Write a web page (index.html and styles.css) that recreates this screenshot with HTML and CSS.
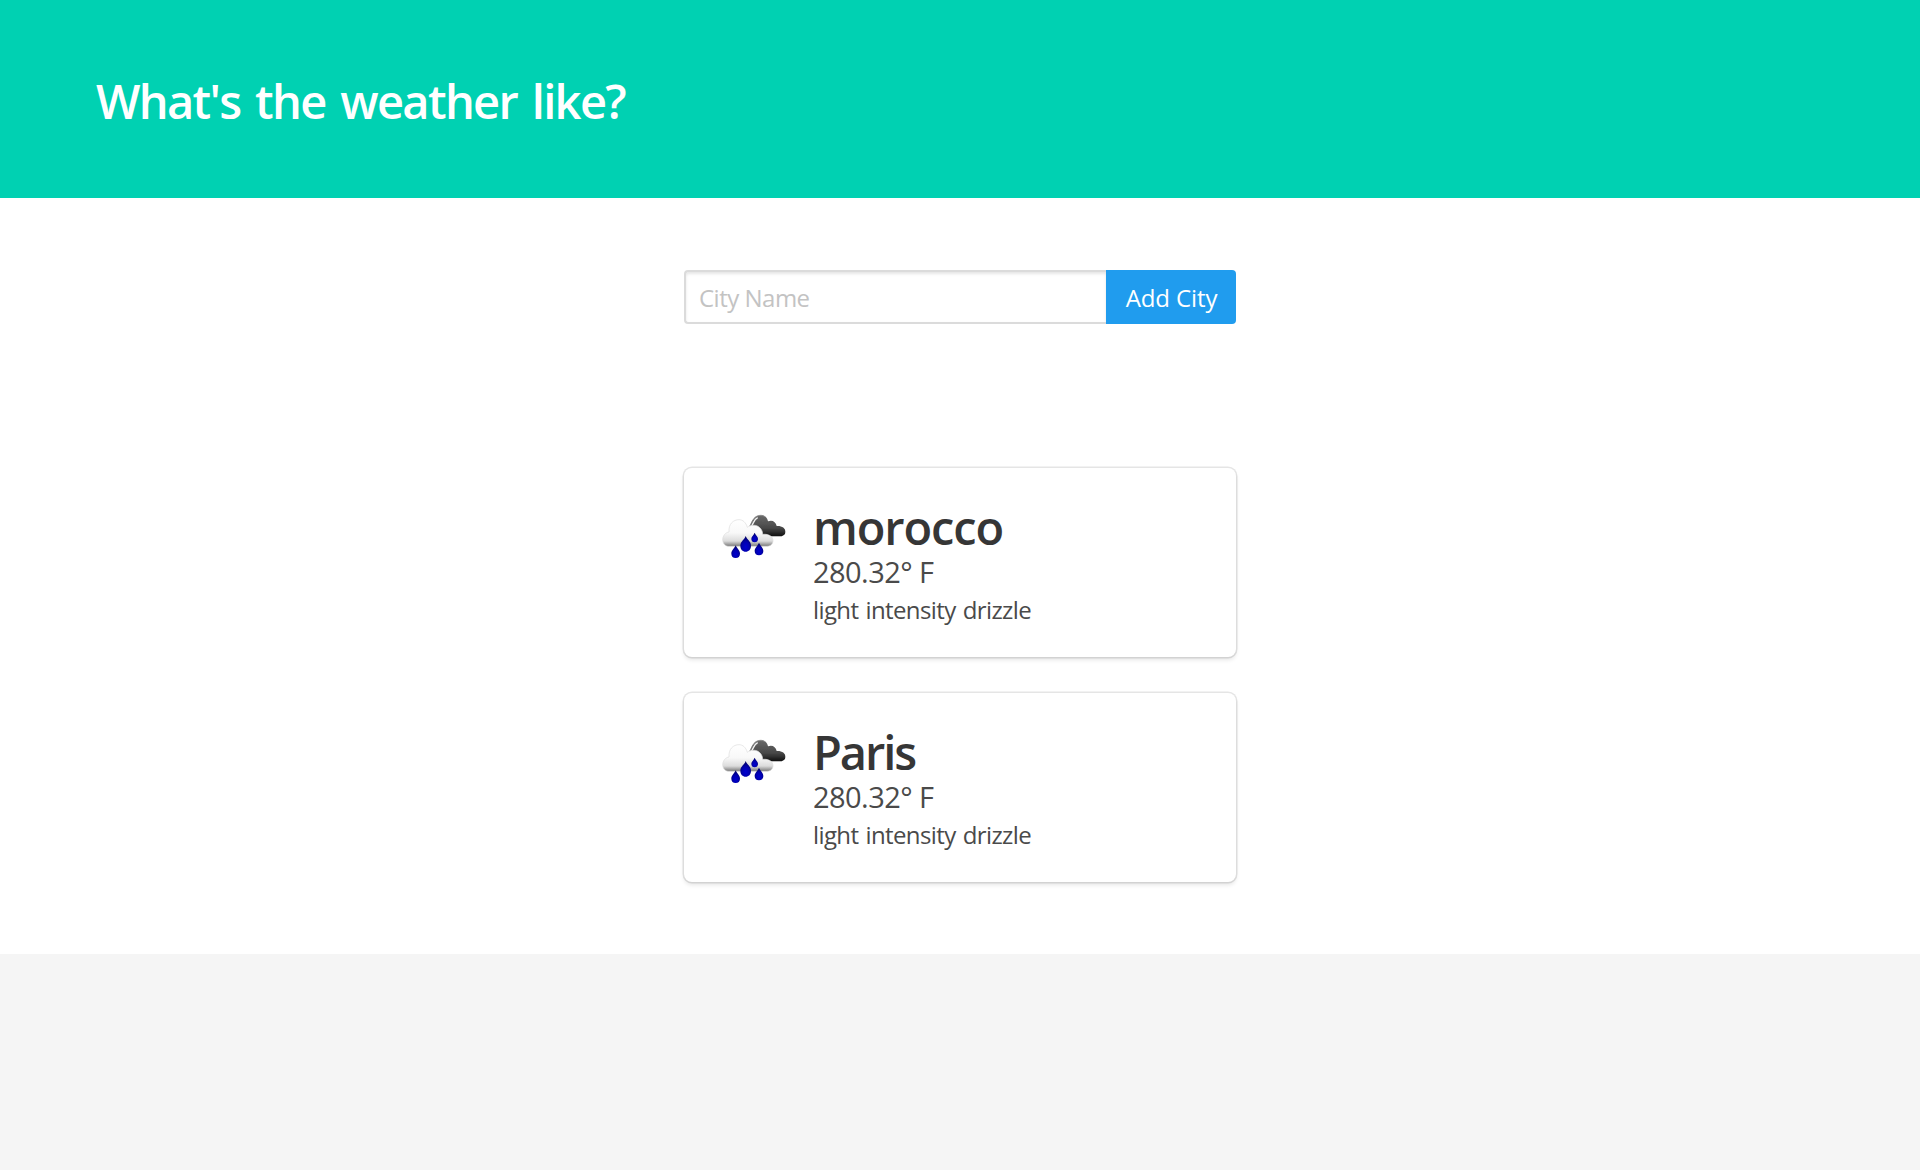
FILE: index.html
```html
<!DOCTYPE html>
<html lang="en">
<head>
<meta charset="utf-8">
<title>What's the weather like?</title>
<link rel="stylesheet" href="styles.css">
</head>
<body>
<svg width="0" height="0" class="defs" aria-hidden="true">
  <defs>
    <linearGradient id="dark" x1="0" y1="0" x2="0" y2="1"><stop offset="0" stop-color="#6a6a6a"/><stop offset=".6" stop-color="#484848"/><stop offset="1" stop-color="#111"/></linearGradient>
    <linearGradient id="light" x1="0" y1="0" x2="0" y2="1"><stop offset="0" stop-color="#fff"/><stop offset=".5" stop-color="#f8f8f8"/><stop offset=".8" stop-color="#dcdcdc"/><stop offset="1" stop-color="#777"/></linearGradient>
    <radialGradient id="drop" cx=".5" cy=".7" r=".6"><stop offset="0" stop-color="#0000d0"/><stop offset=".55" stop-color="#0000b0"/><stop offset="1" stop-color="#00006c"/></radialGradient>
    <filter id="soft" x="-10%" y="-10%" width="120%" height="120%"><feGaussianBlur stdDeviation="1.6"/></filter>
    <symbol id="rain" viewBox="12 -6 225 225">
      <g filter="url(#soft)">
        <path d="M120 78C127 57 139 45 153 46C164 46 172 53 174 64C187 59 197 65 200 78C216 77 226 84 226 95C226 105 218 109 208 109H176C155 109 140 92 120 78Z" fill="url(#dark)"/>
        <path d="M119 79C126 68 127 57 138 50C147 45 158 44 166 51" fill="none" stroke="#888" stroke-width="3"/>
        <path d="M123 80C132 70 130 59 143 53" fill="none" stroke="#f4f4f4" stroke-width="4"/>
        <path d="M54 139C41 137 36 124 39 112C42 103 49 97 57 96C55 72 70 59 87 59C99 59 108 68 112 82C120 76 134 73 144 79C154 85 158 94 158 103C177 101 190 110 189 124C188 135 179 139 170 139Z" fill="url(#light)" stroke="#ddd" stroke-width="2"/>
        <path d="M107 108C111 119 123 124 123 137C123 148 116 155 107 155S91 148 91 137C91 124 104 119 107 108Z" fill="url(#drop)"/>
        <path d="M134 98C137 106 144 109 144 117C144 123 140 127 134 127S124 123 124 117C124 109 131 106 134 98Z" fill="url(#drop)"/>
        <path d="M77 136C80 145 90 150 90 161C90 169 85 174 77 174S64 169 64 161C64 150 74 145 77 136Z" fill="url(#drop)"/>
        <path d="M147 128C150 137 160 142 160 153C160 161 155 166 147 166S134 161 134 153C134 142 144 137 147 128Z" fill="url(#drop)"/>
      </g>
    </symbol>
  </defs>
</svg>
<header class="hero"><h1 class="title hero-title">What's the weather like?</h1></header>
<main class="content">
  <form class="city-form">
    <input class="input" type="text" placeholder="City Name">
    <button class="button" type="button">Add City</button>
  </form>
  <section class="cities">
    <article class="box">
      <svg class="icon"><use href="#rain"/></svg>
      <div class="details">
        <h2 class="title name-morocco">morocco</h2>
        <p class="temperature">280.32° F</p>
        <p class="description">light intensity drizzle</p>
      </div>
    </article>
    <article class="box">
      <svg class="icon"><use href="#rain"/></svg>
      <div class="details">
        <h2 class="title name-paris">Paris</h2>
        <p class="temperature">280.32° F</p>
        <p class="description">light intensity drizzle</p>
      </div>
    </article>
  </section>
</main>
</body>
</html>
```
FILE: styles.css
```css
* { box-sizing: border-box; margin: 0; padding: 0; }
body {
  min-height: 1170px;
  background: #f5f5f5;
  color: #4a4a4a;
  font-family: "Open Sans", "Noto Sans", sans-serif;
  font-size: 24px;
}
.defs { display: block; width: 0; height: 0; position: absolute; }
.hero {
  height: 198px;
  padding: 74px 96px 0;
  background: #00d1b2;
}
.title {
  color: #363636;
  font-size: 47px;
  font-weight: 600;
  line-height: 54px;
  white-space: nowrap;
}
.hero-title { color: #fff; font-size: 47px; letter-spacing: -1.65px; word-spacing: 4px; }
.name-morocco { letter-spacing: -1.1px; }
.name-paris { letter-spacing: -2.1px; }
.content {
  height: 756px;
  padding-top: 72px;
  background: #fff;
}
.city-form {
  display: flex;
  width: 552px;
  height: 54px;
  margin: 0 auto;
}
.input {
  width: 422px;
  height: 54px;
  padding: 1px 13px 0;
  border: 2px solid #dbdbdb;
  border-right: 0;
  border-radius: 4px 0 0 4px;
  background: #fff;
  box-shadow: inset 0 2px 3px rgba(10, 10, 10, .1);
  font-family: inherit;
  font-size: 24px;
  letter-spacing: -.5px;
}
.input::placeholder { color: #c3c3c3; }
.button {
  width: 130px;
  height: 54px;
  padding: 1px 0 0 1px;
  border: 0;
  border-radius: 0 4px 4px 0;
  background: #209cee;
  color: #fff;
  font-family: inherit;
  font-size: 24px;
  letter-spacing: -.1px;
}
.cities {
  display: flex;
  flex-direction: column;
  gap: 36px;
  width: 552px;
  margin: 144px auto 0;
}
.box {
  display: flex;
  gap: 24px;
  height: 189px;
  padding: 30px;
  border-radius: 8px;
  background: #fff;
  box-shadow: 0 3px 4px rgba(10, 10, 10, .1), 0 0 0 1.5px rgba(10, 10, 10, .1);
}
.icon { width: 75px; height: 75px; }
.details { padding-top: 2px; white-space: nowrap; }
.temperature { font-size: 29px; line-height: 36px; letter-spacing: -.55px; }
.description { line-height: 40px; letter-spacing: -.6px; word-spacing: 1.4px; }
```
